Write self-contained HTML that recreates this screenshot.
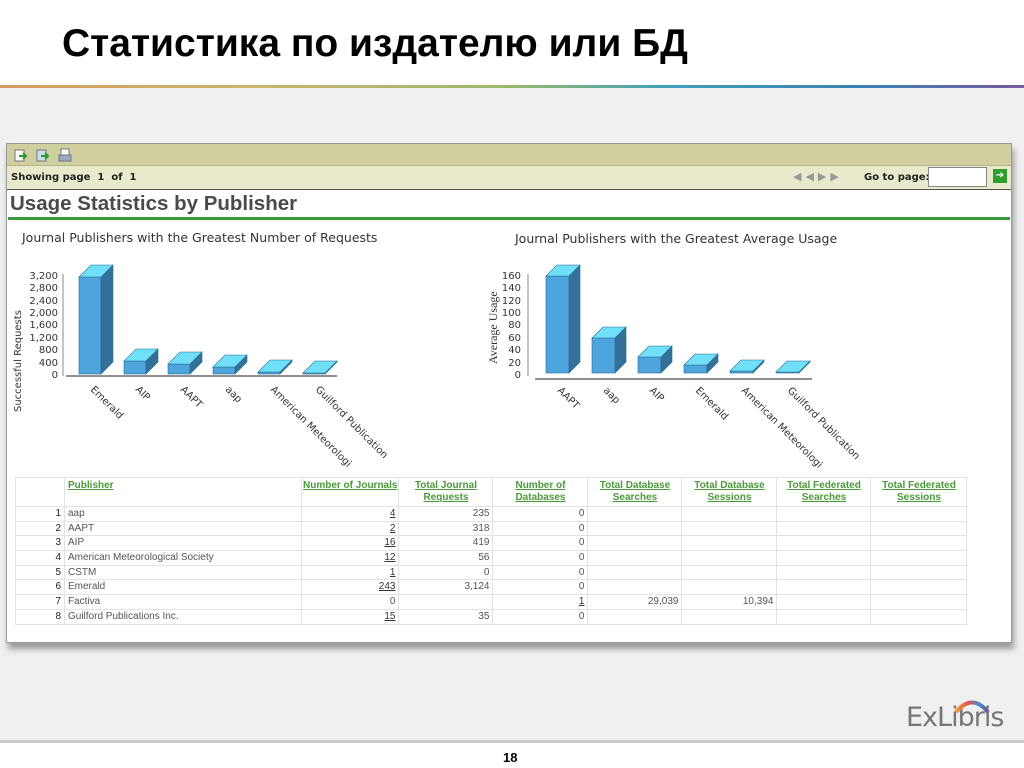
<!DOCTYPE html>
<html><head><meta charset="utf-8"><style>
*{margin:0;padding:0;box-sizing:border-box}
body{width:1024px;height:768px;position:relative;background:#fff;font-family:"Liberation Sans",Arial,sans-serif;overflow:hidden}
.abs{position:absolute}
h1{position:absolute;left:62px;top:22px;font-size:39px;font-weight:bold;color:#000;font-family:"Liberation Sans","DejaVu Sans",sans-serif;white-space:nowrap}
.grad{left:0;top:85px;width:1024px;height:3px;background:linear-gradient(90deg,#d79a5e,#c9b66f 25%,#9ab86a 50%,#3fa0b8 65%,#3d7fb0 85%,#7a5aa0)}
.bg{left:0;top:88px;width:1024px;height:652px;background:#f0f0f0}
.panel{left:6px;top:143px;width:1006px;height:500px;background:#fff;border:1px solid #999;box-shadow:2px 6px 6px #999}
.tb{left:7px;top:144px;width:1004px;height:22px;background:#cfcf9f;border-bottom:1px solid #b5b58a}
.sp{left:7px;top:166px;width:1004px;height:24px;background:#e9e9cb;border-bottom:1px solid #555;font-size:10px;font-weight:bold;font-family:"DejaVu Sans",sans-serif;color:#222}
.ust{left:10px;top:192px;font-size:20.5px;font-weight:bold;color:#4a4a4a;white-space:nowrap}
.gl{left:8px;top:217px;width:1002px;height:3px;background:#3c9a3c}
table{position:absolute;left:15px;top:477px;border-collapse:collapse;font-size:10px;color:#555;table-layout:fixed}
td{border:1px solid #dfe3e8;height:14.7px;padding:0 3px;line-height:12px;white-space:nowrap}
th{border:1px solid #dfe3e8;color:#4a9a3a;text-decoration:underline;font-size:10px;font-weight:bold;vertical-align:top;padding:2px 1px;height:27px;line-height:12px}
td.r{text-align:right}
td.n{text-align:right;color:#222}
u{color:#333}
</style></head><body>
<h1>Статистика по издателю или БД</h1>
<div class="abs grad"></div>
<div class="abs bg"></div>
<div class="abs" style="left:0;top:740px;width:1024px;height:3px;background:#c8c8c8"></div>
<div class="abs" style="left:503px;top:750px;font-size:13px;font-weight:bold">18</div>
<div class="abs" style="left:906px;top:702px;font-size:27px;color:#777;font-family:'DejaVu Sans',sans-serif;letter-spacing:-1px">ExLibris</div>
<svg class="abs" style="left:952px;top:696px" width="40" height="18"><path d="M4 16 Q20 -3 36 16" fill="none" stroke="url(#rb)" stroke-width="4"/><defs><linearGradient id="rb"><stop offset="0" stop-color="#f0a030"/><stop offset=".4" stop-color="#e05050"/><stop offset=".7" stop-color="#4090d0"/><stop offset="1" stop-color="#7050a0"/></linearGradient></defs></svg>

<div class="abs panel"></div>
<div class="abs tb"></div>
<svg class="abs" style="left:14px;top:148px" width="62" height="16">
<rect x="1" y="2" width="9" height="11" fill="#fff" stroke="#777"/><path d="M5 8h6M9 5l3 3-3 3" stroke="#2a9a2a" stroke-width="2" fill="none"/>
<rect x="23" y="2" width="9" height="11" fill="#cde" stroke="#777"/><path d="M27 8h6M31 5l3 3-3 3" stroke="#2a9a2a" stroke-width="2" fill="none"/>
<rect x="47" y="1" width="8" height="6" fill="#fff" stroke="#777"/><rect x="45" y="7" width="12" height="6" fill="#9ab" stroke="#678"/>
</svg>
<div class="abs sp"><span class="abs" style="left:4px;top:6px">Showing page &nbsp;1 &nbsp;of &nbsp;1</span>
<span class="abs" style="left:786px;top:4px;color:#999;font-size:11px;letter-spacing:4px">◀◀▶▶</span>
<span class="abs" style="left:857px;top:6px">Go to page:</span>
<span class="abs" style="left:921px;top:1px;width:59px;height:20px;background:#fff;border:1px solid #888"></span>
<span class="abs" style="left:986px;top:3px;width:14px;height:14px;background:#2e9e2e;color:#fff;font-size:10px;text-align:center;line-height:14px">➔</span>
</div>
<div class="abs ust">Usage Statistics by Publisher</div>
<div class="abs gl"></div>

<svg class="abs" style="left:0;top:0" width="1024" height="480" font-family="DejaVu Sans,sans-serif">
<text x="22" y="242" font-size="12.5" fill="#333">Journal Publishers with the Greatest Number of Requests</text>
<text x="515" y="243" font-size="12.5" fill="#333">Journal Publishers with the Greatest Average Usage</text>
<g font-size="10" fill="#333" text-anchor="end">
<text x="58" y="279">3,200</text><text x="58" y="291">2,800</text><text x="58" y="304">2,400</text><text x="58" y="316">2,000</text><text x="58" y="328">1,600</text><text x="58" y="341">1,200</text><text x="58" y="353">800</text><text x="58" y="366">400</text><text x="58" y="378">0</text>
<text x="521" y="279">160</text><text x="521" y="291">140</text><text x="521" y="304">120</text><text x="521" y="316">100</text><text x="521" y="328">80</text><text x="521" y="341">60</text><text x="521" y="353">40</text><text x="521" y="366">20</text><text x="521" y="378">0</text>
</g>
<text transform="translate(21,412) rotate(-90)" font-size="10" fill="#333">Successful Requests</text>
<text transform="translate(497,364) rotate(-90)" font-size="12" fill="#333" font-family="Liberation Serif,serif">Average Usage</text>
<path d="M63 274V376M528 274V376" stroke="#888"/>
<path d="M66 376H337M535 379H812" stroke="#222"/>
<g stroke="#2b6d95" stroke-width=".6">
<g fill="#4ea4dc"><rect x="79" y="277" width="22" height="97"/><rect x="124" y="361" width="22" height="13"/><rect x="168" y="364" width="22" height="10"/><rect x="213" y="367" width="22" height="7"/><rect x="258" y="372" width="22" height="2"/><rect x="303" y="373" width="22" height="1"/>
<rect x="546" y="276" width="23" height="97"/><rect x="592" y="338" width="23" height="35"/><rect x="638" y="357" width="23" height="16"/><rect x="684" y="365" width="23" height="8"/><rect x="730" y="371" width="23" height="2"/><rect x="776" y="372" width="23" height="1"/></g>
<g fill="#33709a">
<path d="M101 277l12-12v97l-12 12z"/><path d="M146 361l12-12v13l-12 12z"/><path d="M190 364l12-12v10l-12 12z"/><path d="M235 367l12-12v7l-12 12z"/><path d="M280 372l12-12v2l-12 12z"/><path d="M325 373l12-12v1l-12 12z"/>
<path d="M569 276l11-11v97l-11 11z"/><path d="M615 338l11-11v35l-11 11z"/><path d="M661 357l11-11v16l-11 11z"/><path d="M707 365l11-11v8l-11 11z"/><path d="M753 371l11-11v2l-11 11z"/><path d="M799 372l11-11v1l-11 11z"/></g>
<g fill="#6fe0f8">
<path d="M79 277h22l12-12h-22z"/><path d="M124 361h22l12-12h-22z"/><path d="M168 364h22l12-12h-22z"/><path d="M213 367h22l12-12h-22z"/><path d="M258 372h22l12-12h-22z"/><path d="M303 373h22l12-12h-22z"/>
<path d="M546 276h23l11-11h-23z"/><path d="M592 338h23l11-11h-23z"/><path d="M638 357h23l11-11h-23z"/><path d="M684 365h23l11-11h-23z"/><path d="M730 371h23l11-11h-23z"/><path d="M776 372h23l11-11h-23z"/></g>
</g>
<g font-size="10" fill="#333">
<text transform="translate(90,390) rotate(45)">Emerald</text>
<text transform="translate(135,390) rotate(45)">AIP</text>
<text transform="translate(180,390) rotate(45)">AAPT</text>
<text transform="translate(225,390) rotate(45)">aap</text>
<text transform="translate(270,390) rotate(45)">American Meteorologi</text>
<text transform="translate(315,390) rotate(45)">Guilford Publication</text>
<text transform="translate(557,391) rotate(45)">AAPT</text>
<text transform="translate(603,391) rotate(45)">aap</text>
<text transform="translate(649,391) rotate(45)">AIP</text>
<text transform="translate(695,391) rotate(45)">Emerald</text>
<text transform="translate(741,391) rotate(45)">American Meteorologi</text>
<text transform="translate(787,391) rotate(45)">Guilford Publication</text>
</g>
</svg>

<table>
<colgroup><col style="width:49px"><col style="width:237px"><col style="width:96px"><col style="width:94px"><col style="width:95px"><col style="width:94px"><col style="width:95px"><col style="width:94px"><col style="width:96px"></colgroup>
<tr><th></th><th style="text-align:left;padding-left:3px">Publisher</th><th style="white-space:nowrap">Number of Journals</th><th>Total Journal Requests</th><th>Number of Databases</th><th>Total Database Searches</th><th>Total Database Sessions</th><th>Total Federated Searches</th><th>Total Federated Sessions</th></tr>
<tr><td class="n">1</td><td>aap</td><td class="r"><u>4</u></td><td class="r">235</td><td class="r">0</td><td></td><td></td><td></td><td></td></tr>
<tr><td class="n">2</td><td>AAPT</td><td class="r"><u>2</u></td><td class="r">318</td><td class="r">0</td><td></td><td></td><td></td><td></td></tr>
<tr><td class="n">3</td><td>AIP</td><td class="r"><u>16</u></td><td class="r">419</td><td class="r">0</td><td></td><td></td><td></td><td></td></tr>
<tr><td class="n">4</td><td>American Meteorological Society</td><td class="r"><u>12</u></td><td class="r">56</td><td class="r">0</td><td></td><td></td><td></td><td></td></tr>
<tr><td class="n">5</td><td>CSTM</td><td class="r"><u>1</u></td><td class="r">0</td><td class="r">0</td><td></td><td></td><td></td><td></td></tr>
<tr><td class="n">6</td><td>Emerald</td><td class="r"><u>243</u></td><td class="r">3,124</td><td class="r">0</td><td></td><td></td><td></td><td></td></tr>
<tr><td class="n">7</td><td>Factiva</td><td class="r">0</td><td></td><td class="r"><u>1</u></td><td class="r">29,039</td><td class="r">10,394</td><td></td><td></td></tr>
<tr><td class="n">8</td><td>Guilford Publications Inc.</td><td class="r"><u>15</u></td><td class="r">35</td><td class="r">0</td><td></td><td></td><td></td><td></td></tr>
</table>
</body></html>
